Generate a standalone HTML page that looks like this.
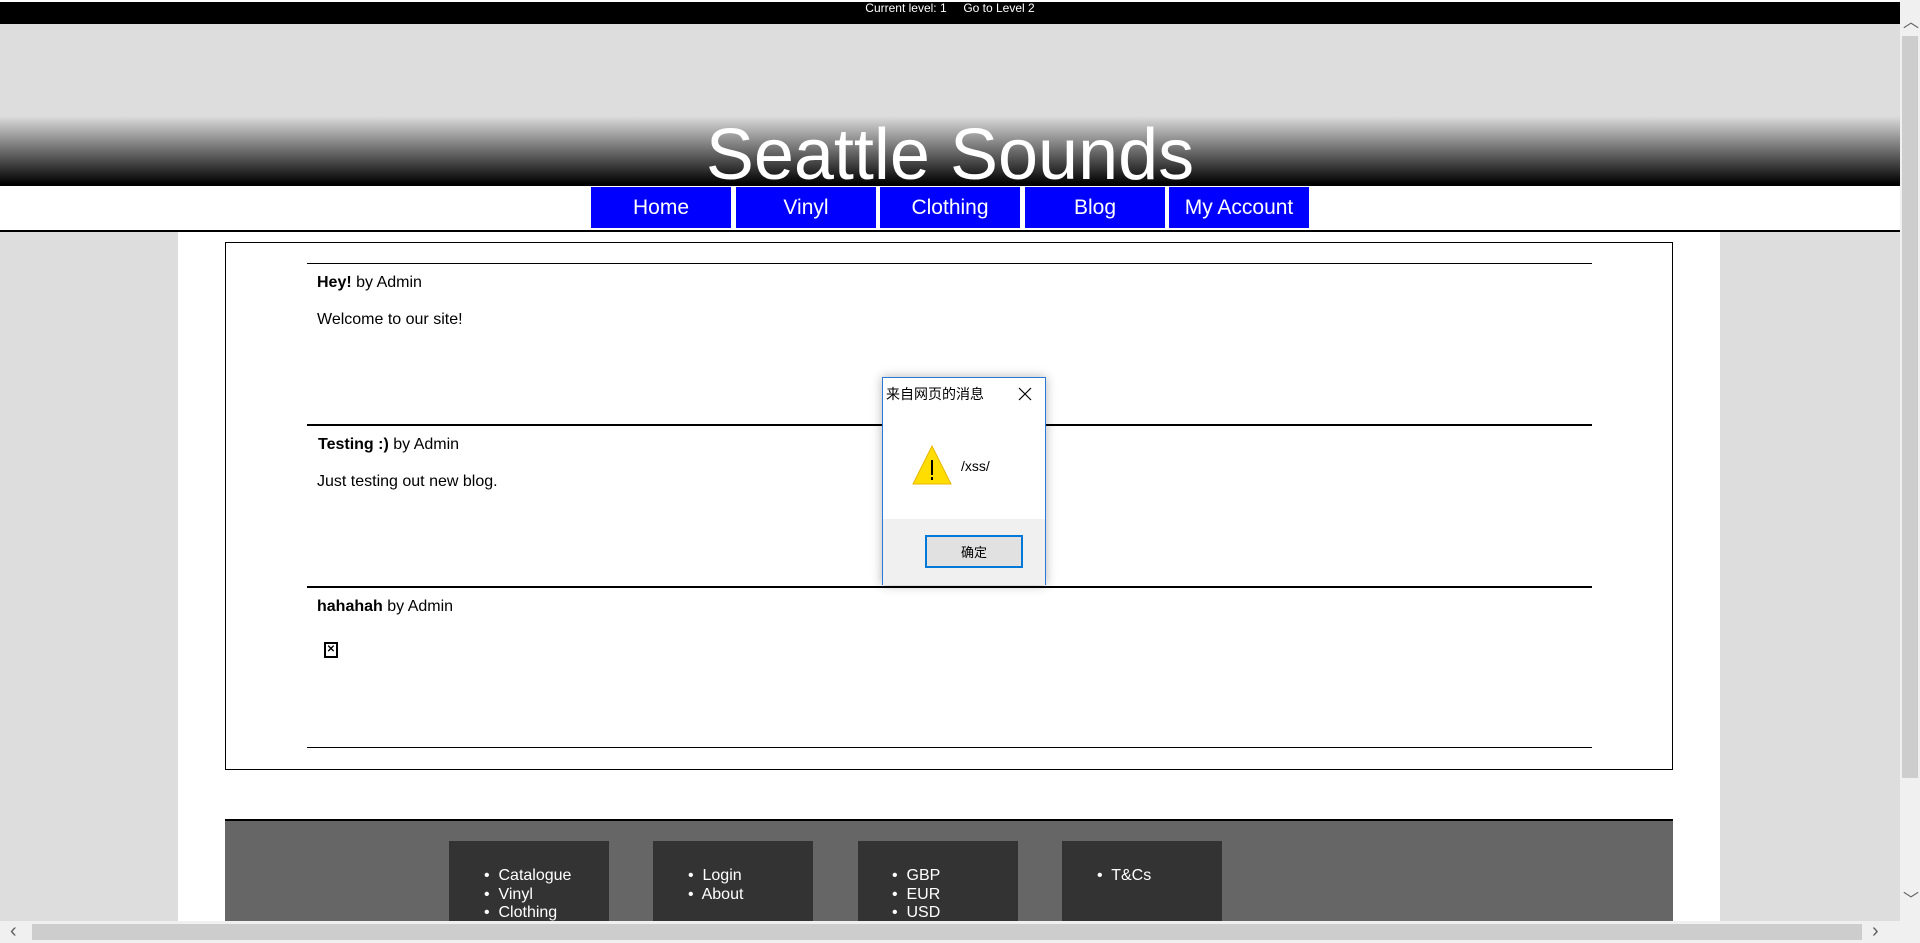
<!DOCTYPE html>
<html><head><meta charset="utf-8"><style>
*{margin:0;padding:0;box-sizing:border-box}
body{width:1920px;height:943px;overflow:hidden;background:#ddd;font-family:"Liberation Sans",Arial,sans-serif;position:relative}
.a{position:absolute}
</style></head><body>
<div class="a" style="left:0;top:0;width:1900px;height:2px;background:#fff"></div>
<div class="a" style="left:0;top:2px;width:1900px;height:22px;background:#000;color:#fff;font-size:12px;text-align:center;line-height:12px">Current level: 1 &nbsp;&nbsp;&nbsp; Go to Level 2</div>
<div class="a" style="left:0;top:24px;width:1900px;height:92px;background:#ddd"></div>
<div class="a" style="left:0;top:116px;width:1900px;height:68px;background:linear-gradient(#ddd,#000)"></div>
<div class="a" style="left:0;top:110px;width:1900px;text-align:center;color:#fff;font-size:72px;line-height:90px">Seattle Sounds</div>
<div class="a" style="left:0;top:184px;width:1900px;height:2px;background:#000"></div>
<div class="a" style="left:0;top:186px;width:1900px;height:44px;background:#fff"></div>
<div class="a" style="left:591px;top:187px;width:140px;height:41px;background:#00f;color:#fff;font-size:21px;text-align:center;line-height:42px">Home</div>
<div class="a" style="left:736px;top:187px;width:140px;height:41px;background:#00f;color:#fff;font-size:21px;text-align:center;line-height:42px">Vinyl</div>
<div class="a" style="left:880px;top:187px;width:140px;height:41px;background:#00f;color:#fff;font-size:21px;text-align:center;line-height:42px">Clothing</div>
<div class="a" style="left:1025px;top:187px;width:140px;height:41px;background:#00f;color:#fff;font-size:21px;text-align:center;line-height:42px">Blog</div>
<div class="a" style="left:1169px;top:187px;width:140px;height:41px;background:#00f;color:#fff;font-size:21px;text-align:center;line-height:42px">My Account</div>
<div class="a" style="left:0;top:230px;width:1900px;height:2px;background:#000"></div>
<div class="a" style="left:178px;top:232px;width:1542px;height:690px;background:#fff"></div>
<div class="a" style="left:225px;top:242px;width:1448px;height:528px;border:1px solid #000"></div>
<div class="a" style="left:307px;top:263px;width:1285px;height:1px;background:#000"></div>
<div class="a" style="left:307px;top:424px;width:1285px;height:2px;background:#000"></div>
<div class="a" style="left:307px;top:586px;width:1285px;height:2px;background:#000"></div>
<div class="a" style="left:307px;top:747px;width:1285px;height:1px;background:#000"></div>
<div class="a" style="left:317px;top:274px;font-size:16px"><b>Hey!</b> by Admin</div>
<div class="a" style="left:317px;top:311px;font-size:16px">Welcome to our site!</div>
<div class="a" style="left:318px;top:436px;font-size:16px"><b>Testing :)</b> by Admin</div>
<div class="a" style="left:317px;top:473px;font-size:16px">Just testing out new blog.</div>
<div class="a" style="left:317px;top:598px;font-size:16px"><b>hahahah</b> by Admin</div>
<div class="a" style="left:324px;top:642px;width:14px;height:16px;border:2px solid #000;font-size:10px;line-height:11px;text-align:center;font-weight:bold">✕</div>
<div class="a" style="left:225px;top:819px;width:1448px;height:103px;background:#666;border-top:2px solid #000"></div>
<div class="a" style="left:449px;top:841px;width:160px;height:81px;background:#333"></div>
<div class="a" style="left:653px;top:841px;width:160px;height:81px;background:#333"></div>
<div class="a" style="left:858px;top:841px;width:160px;height:81px;background:#333"></div>
<div class="a" style="left:1062px;top:841px;width:160px;height:81px;background:#333"></div>
<div class="a" style="left:484px;top:867px;color:#fff;font-size:16px;line-height:18.5px">•&nbsp; Catalogue<br>•&nbsp; Vinyl<br>•&nbsp; Clothing</div>
<div class="a" style="left:688px;top:867px;color:#fff;font-size:16px;line-height:18.5px">•&nbsp; Login<br>•&nbsp; About</div>
<div class="a" style="left:892px;top:867px;color:#fff;font-size:16px;line-height:18.5px">•&nbsp; GBP<br>•&nbsp; EUR<br>•&nbsp; USD</div>
<div class="a" style="left:1097px;top:867px;color:#fff;font-size:16px;line-height:18.5px">•&nbsp; T&amp;Cs</div>
<div class="a" style="left:1900px;top:0;width:20px;height:921px;background:#f0f0f0"></div>
<div class="a" style="left:1902px;top:36px;width:16px;height:742px;background:#cdcdcd"></div>
<div class="a" style="left:1903px;top:8px;color:#606060;font-size:16px">︿</div>
<div class="a" style="left:1903px;top:886px;color:#606060;font-size:16px">﹀</div>
<div class="a" style="left:0;top:921px;width:1920px;height:22px;background:#f0f0f0"></div>
<div class="a" style="left:32px;top:924px;width:1830px;height:16px;background:#cdcdcd"></div>
<div class="a" style="left:10px;top:920px;color:#606060;font-size:20px">‹</div>
<div class="a" style="left:1872px;top:920px;color:#606060;font-size:20px">›</div>
<div class="a" style="left:882px;top:377px;width:164px;height:208px;background:#fff;border:1px solid #2b7bd6;box-shadow:0 0 10px rgba(0,0,0,.3)">
<div class="a" style="left:3px;top:8px;font-size:14px;font-family:'Noto Sans CJK SC',sans-serif;line-height:16px">来自网页的消息</div>
<svg class="a" style="left:134px;top:8px" width="16" height="16"><path d="M2 2L14 14M14 2L2 14" stroke="#000" stroke-width="1.2"/></svg>
<svg class="a" style="left:28px;top:66px" width="42" height="42"><path d="M21 2L40 40H2Z" fill="#ffdd00" stroke="#e8b800"/><path d="M21 16V31" stroke="#000" stroke-width="2"/><rect x="20" y="33" width="2" height="3" fill="#000"/></svg>
<div class="a" style="left:78px;top:80px;font-size:14px">/xss/</div>
<div class="a" style="left:0;top:141px;width:162px;height:66px;background:#f0f0f0"></div>
<div class="a" style="left:42px;top:157px;width:98px;height:33px;background:#e1e1e1;border:2px solid #0078d7;font-size:13px;text-align:center;line-height:29px;font-family:'Noto Sans CJK SC',sans-serif">确定</div>
</div>
</body></html>
